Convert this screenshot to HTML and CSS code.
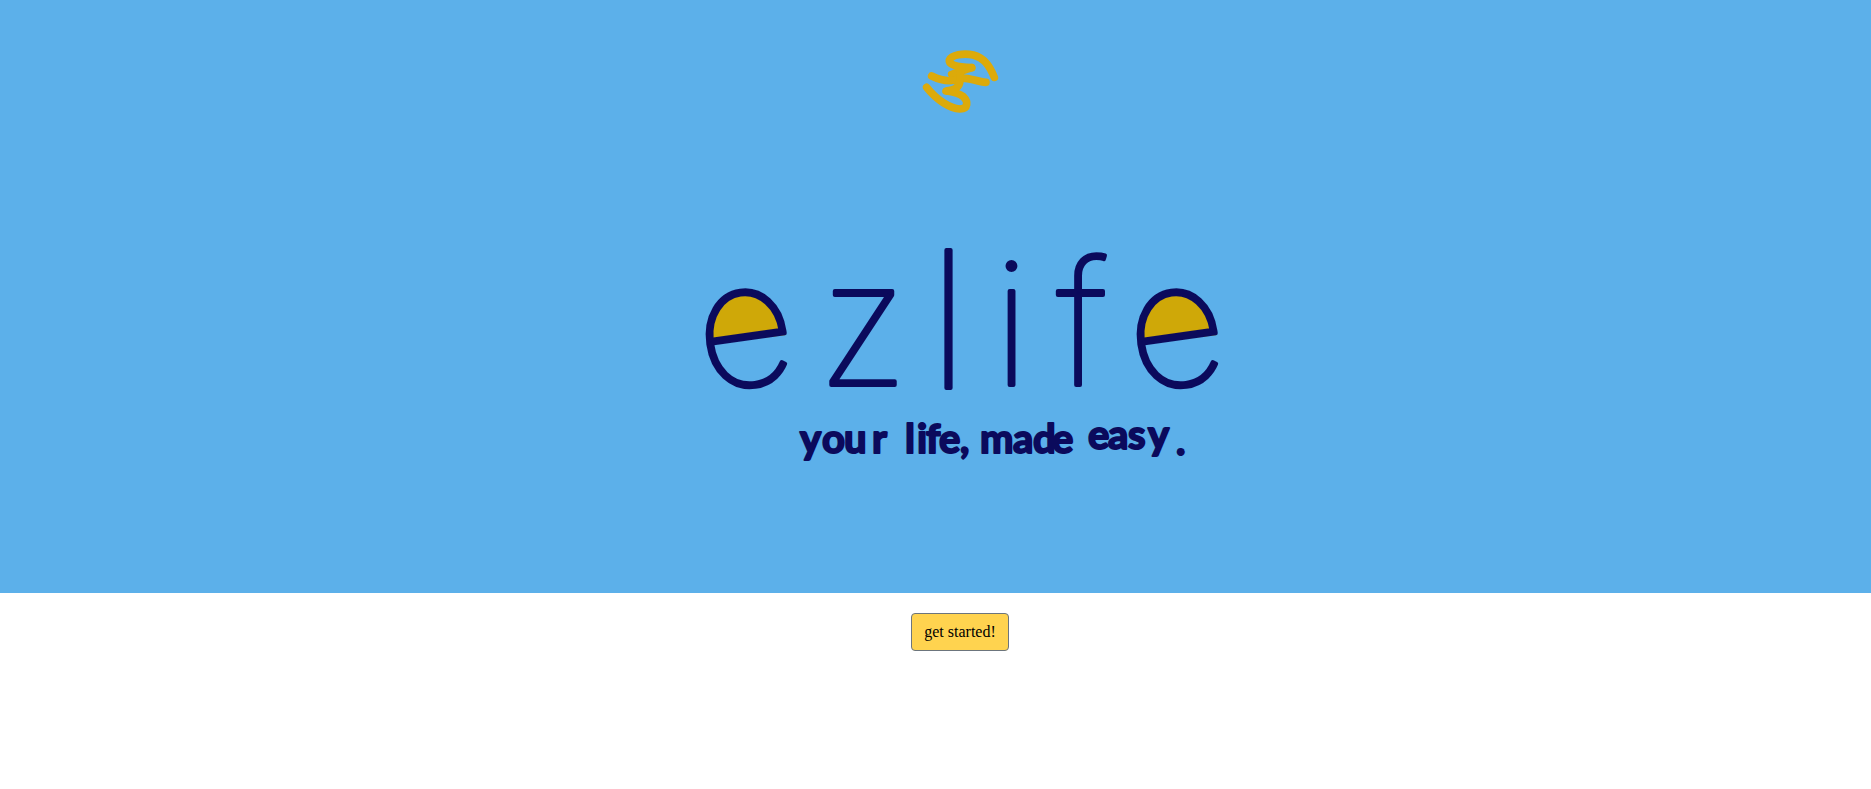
FILE: index.html
```html
<!DOCTYPE html>
<html lang="en">
<head>
<meta charset="utf-8">
<title>ezlife</title>
<link rel="stylesheet" href="styles.css">
</head>
<body>
<header class="hero">
<svg class="hero-art" viewBox="0 0 1871 593" width="1871" height="593" role="img" aria-label="ezlife, your life, made easy.">
  <g class="swirl" transform="translate(910 40) scale(0.3333)">
    <path d="M253 112C240 80 225 55 190 45C160 38 125 45 118 60C115 75 140 80 185 83"/>
    <path d="M125 103C150 95 165 90 185 83"/>
    <path d="M65 108C100 125 130 125 150 115C170 110 200 125 228 127"/>
    <path d="M50 142C80 180 120 205 150 207C175 207 175 185 160 170C140 155 120 155 108 153C130 150 150 145 150 120C150 105 150 95 155 85"/>
  </g>
  <path class="bowl" d="M712 344C709 310 722 292 745 292C768 291 783 310 786 335Z"/>
  <path class="bowl" d="M1143 344C1140 310 1153 292 1176 292C1199 291 1214 310 1217 335Z"/>
  <text class="wordmark" x="704 818 928 993 1057 1135" y="392 385 388 385 385 392" rotate="-8 0 0 0 0 -8">ez<tspan class="tall">l</tspan>ife</text>
  <text class="tagline" x="800 822 844 872 890 905 917 926 939 960 972 980 1013 1033 1052 1078 1088 1108 1128 1148 1176" y="453 453 453 453 453 453 453 453 453 453 453 453 453 453 453 449 449 449 449 449 455">your life, made easy.</text>
</svg>
</header>
<main class="actions">
  <button class="start" type="button">get started!</button>
</main>
</body>
</html>
```
FILE: styles.css
```css
html, body {
  margin: 0;
  padding: 0;
  background: #fff;
}
body {
  font-family: "Liberation Serif", serif;
  overflow: hidden;
}
.hero {
  background: #5cb0ea;
  height: 593px;
}
.hero-art {
  display: block;
}
.swirl path {
  fill: none;
  stroke: #dcaa0a;
  stroke-width: 23;
  stroke-linecap: round;
  stroke-linejoin: round;
}
.bowl {
  fill: #cfa808;
}
.wordmark {
  font-family: Inter, sans-serif;
  font-weight: 100;
  font-size: 172px;
  fill: #0b0a5c;
  stroke: #0b0a5c;
  stroke-width: 4;
  stroke-linejoin: round;
}
.tall {
  font-size: 190px;
}
.tagline {
  font-family: Lato, sans-serif;
  font-weight: 700;
  font-size: 40px;
  fill: #0b0a5c;
  stroke: #0b0a5c;
  stroke-width: 2;
  stroke-linejoin: round;
}
.actions {
  display: flex;
  justify-content: center;
  padding: 20px 0 0 49px;
}
.start {
  width: 98px;
  height: 38px;
  padding: 0;
  background: #ffd34f;
  border: 1px solid #6c757d;
  border-radius: 4px;
  color: #000;
  font-family: "Liberation Serif", serif;
  font-size: 16px;
}
```
